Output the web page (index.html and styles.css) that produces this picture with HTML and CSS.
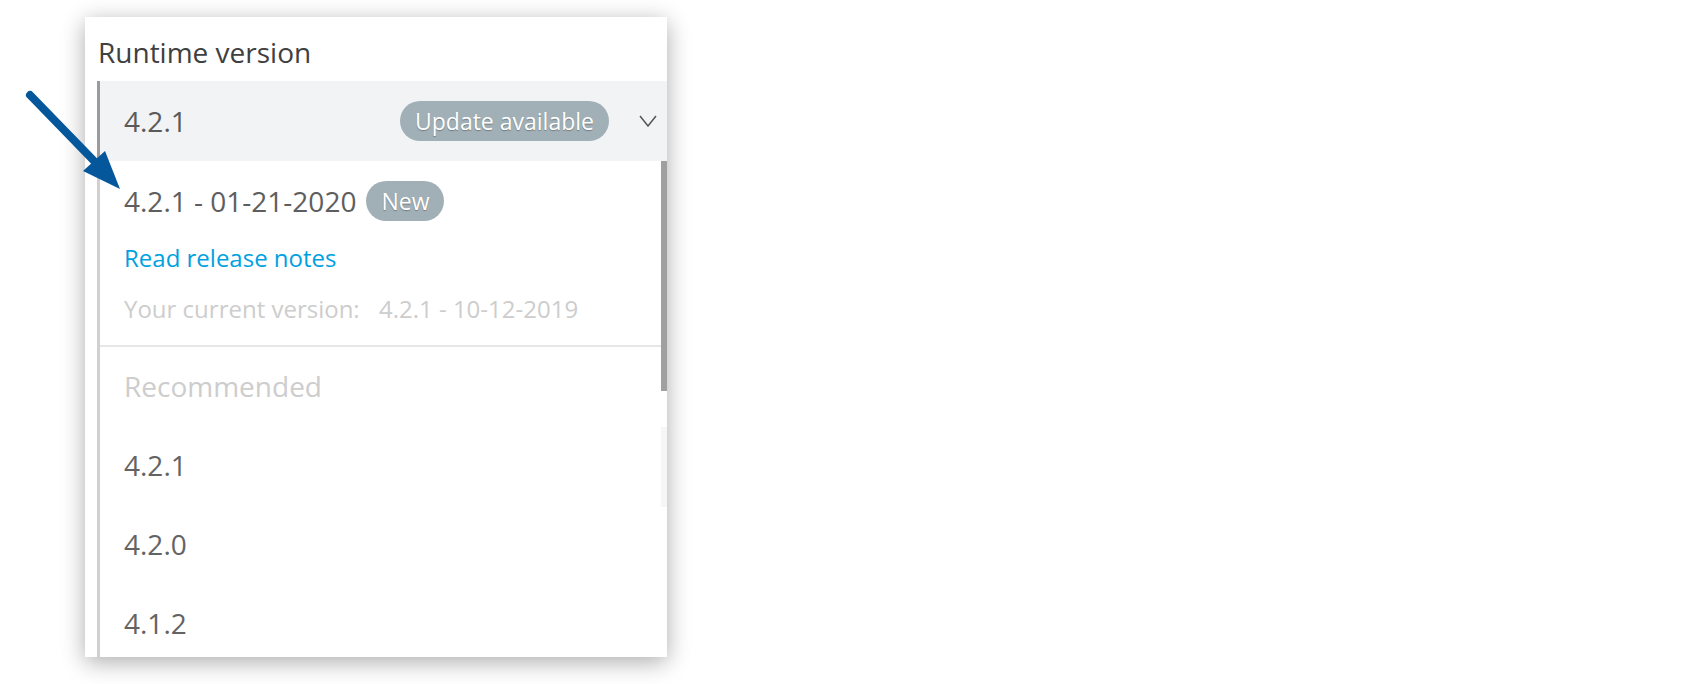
FILE: index.html
```html
<!DOCTYPE html>
<html lang="en">
<head>
<meta charset="utf-8">
<title>Runtime version</title>
<link rel="stylesheet" href="styles.css">
</head>
<body>
<div class="stage">
  <div class="card">
    <div class="label">Runtime version</div>
    <div class="select">
      <span class="sel-value">4.2.1</span>
      <span class="badge badge-update">Update available</span>
      <svg class="chev" width="18" height="12" viewBox="0 0 18 12"><polyline points="1,1 9,11 17,1" fill="none" stroke="#555" stroke-width="1.5"/></svg>
    </div>
    <div class="dropdown">
      <div class="list">
        <div class="latest">
          <div class="latest-row">
            <span class="latest-value">4.2.1 - 01-21-2020</span>
            <span class="badge badge-new">New</span>
          </div>
          <div class="notes">Read release notes</div>
          <div class="current"><span>Your current version:</span> <span class="current-val">4.2.1 - 10-12-2019</span></div>
        </div>
        <div class="divider"></div>
        <div class="group-title">Recommended</div>
        <div class="item">4.2.1</div>
        <div class="item">4.2.0</div>
        <div class="item">4.1.2</div>
      </div>
      <div class="track">
        <div class="thumb"></div>
        <div class="ghost"></div>
      </div>
    </div>
  </div>
  <svg class="arrow" width="140" height="200" viewBox="0 0 140 200">
    <line x1="30" y1="95" x2="97" y2="164" stroke="#04579b" stroke-width="8" stroke-linecap="round"/>
    <polygon points="120,189 105,151 83,171" fill="#04579b"/>
  </svg>
</div>
</body>
</html>
```
FILE: styles.css
```css
* { box-sizing: border-box; }
html, body { margin: 0; padding: 0; background: #fff; }
body { font-family: "Open Sans", sans-serif; }

.stage {
  position: relative;
  width: 1684px;
  height: 684px;
  padding: 17px 0 0 85px;
}

.card {
  width: 582px;
  height: 640px;
  background: #fff;
  box-shadow: 0 5px 22px rgba(0, 0, 0, 0.33);
  display: flex;
  flex-direction: column;
  overflow: hidden;
}

.label {
  font-size: 28px;
  line-height: 38px;
  color: #3f4040;
  padding: 16px 13px 10px;
}

.select {
  height: 80px;
  flex: none;
  margin-left: 12px;
  border-left: 3px solid #9b9b9b;
  background: #f2f3f5;
  display: flex;
  align-items: center;
  padding: 0 10px 0 24px;
}

.sel-value {
  flex: 1;
  font-size: 28px;
  color: #5a5a5a;
}

.badge {
  display: inline-flex;
  align-items: center;
  height: 40px;
  border-radius: 20px;
  background: #a1b0b7;
  color: #fff;
  font-size: 23px;
  padding: 0 15px;
  text-shadow: 0 1px 1px rgba(0, 0, 0, 0.3);
}

.badge-update { margin-right: 30px; }
.chev { display: block; }

.dropdown {
  flex: 1;
  min-height: 0;
  margin-left: 12px;
  border-left: 3px solid #d0d0d0;
  display: flex;
}

.list {
  flex: 1;
  min-width: 0;
}

.latest {
  padding: 20px 0 20px 24px;
}

.latest-row {
  display: flex;
  align-items: center;
  gap: 10px;
  height: 40px;
}

.latest-value {
  font-size: 28px;
  color: #5e5e5e;
}

.notes {
  margin-top: 21px;
  font-size: 24px;
  line-height: 32px;
  color: #00a1e0;
}

.current {
  margin-top: 19px;
  font-size: 24px;
  line-height: 32px;
  color: #cdcdcd;
}

.current-val { margin-left: 13px; }

.divider {
  height: 2px;
  background: #e6e6e6;
}

.group-title,
.item {
  font-size: 28px;
  line-height: 79px;
  padding-left: 24px;
}

.group-title { color: #cdcdcd; }
.item { color: #636363; }

.track {
  width: 6px;
  flex: none;
  display: flex;
  flex-direction: column;
}

.thumb {
  height: 230px;
  background: #a0a0a0;
}

.ghost {
  margin-top: 36px;
  height: 80px;
  background: #f6f6f6;
}

.arrow {
  position: absolute;
  left: 0;
  top: 0;
}
```
